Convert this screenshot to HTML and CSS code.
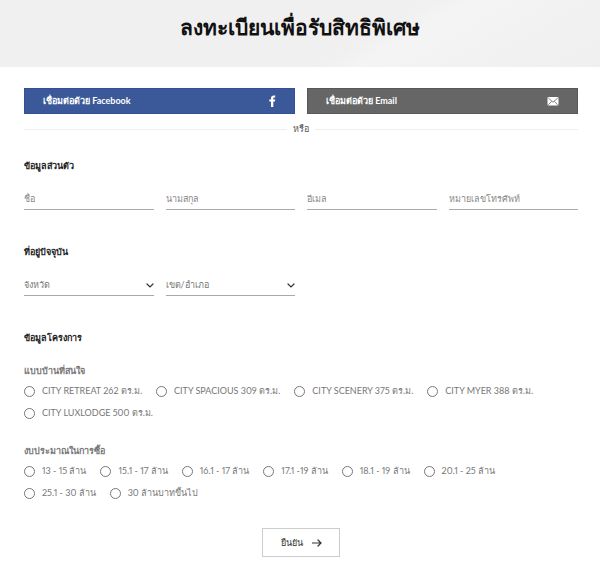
FILE: index.html
```html
<!DOCTYPE html>
<html lang="th">
<head>
    <meta charset="UTF-8">
    <meta name="viewport" content="width=device-width, initial-scale=1.0">
    <title>ลงทะเบียนเพื่อรับสิทธิพิเศษ</title>
    <link rel="stylesheet" href="styles.css">
</head>
<body>
    <header class="page-header">
        <h1>ลงทะเบียนเพื่อรับสิทธิพิเศษ</h1>
    </header>

    <main>
        <form class="register-form">
            <div class="connect">
                <button type="button" class="connect-btn facebook">
                    <span>เชื่อมต่อด้วย Facebook</span>
                    <svg width="8" height="12" viewBox="1 0 8 12" fill="#fff">
                        <path d="M4 12V6.6H2.3V4.5H4V3.2C4 1.2 5 .4 6.8.4c.7 0 1.2 0 1.4.1v1.9H7.2c-.8 0-.9.4-.9 1v1.1h1.9L8 6.6H6.3V12z"/>
                    </svg>
                </button>
                <button type="button" class="connect-btn email">
                    <span>เชื่อมต่อด้วย Email</span>
                    <svg width="12" height="12" viewBox="0 0 12 12">
                        <rect x="0.5" y="2" width="11" height="8.5" rx="1" fill="#fff"/>
                        <path d="M1.5 3.2L6 7.2l4.5-4M1.5 9.6l3-3M10.5 9.6l-3-3" fill="none" stroke="#666" stroke-width="0.8"/>
                    </svg>
                </button>
            </div>

            <div class="divider">หรือ</div>

            <section>
                <h2>ข้อมูลส่วนตัว</h2>
                <div class="fields">
                    <input type="text" name="firstname" placeholder="ชื่อ" aria-label="ชื่อ">
                    <input type="text" name="lastname" placeholder="นามสกุล" aria-label="นามสกุล">
                    <input type="email" name="email" placeholder="อีเมล" aria-label="อีเมล">
                    <input type="tel" name="phone" placeholder="หมายเลขโทรศัพท์" aria-label="หมายเลขโทรศัพท์">
                </div>
            </section>

            <section>
                <h2>ที่อยู่ปัจจุบัน</h2>
                <div class="fields">
                    <div class="select">
                        <select name="province" aria-label="จังหวัด">
                            <option>จังหวัด</option>
                        </select>
                        <svg width="8" height="6" viewBox="0 0 8 6"><path d="M1 1l3 3 3-3"/></svg>
                    </div>
                    <div class="select">
                        <select name="district" aria-label="เขต/อำเภอ">
                            <option>เขต/อำเภอ</option>
                        </select>
                        <svg width="8" height="6" viewBox="0 0 8 6"><path d="M1 1l3 3 3-3"/></svg>
                    </div>
                </div>
            </section>

            <section>
                <h2>ข้อมูลโครงการ</h2>
                <fieldset>
                    <legend>แบบบ้านที่สนใจ</legend>
                    <div class="options">
                        <label><input type="radio" name="house">CITY RETREAT 262 ตร.ม.</label>
                        <label><input type="radio" name="house">CITY SPACIOUS 309 ตร.ม.</label>
                        <label><input type="radio" name="house">CITY SCENERY 375 ตร.ม.</label>
                        <label><input type="radio" name="house">CITY MYER 388 ตร.ม.</label>
                        <label><input type="radio" name="house">CITY LUXLODGE 500 ตร.ม.</label>
                    </div>
                </fieldset>
                <fieldset>
                    <legend>งบประมาณในการซื้อ</legend>
                    <div class="options">
                        <label><input type="radio" name="budget">13 - 15 ล้าน</label>
                        <label><input type="radio" name="budget">15.1 - 17 ล้าน</label>
                        <label><input type="radio" name="budget">16.1 - 17 ล้าน</label>
                        <label><input type="radio" name="budget">17.1 -19 ล้าน</label>
                        <label><input type="radio" name="budget">18.1 - 19 ล้าน</label>
                        <label><input type="radio" name="budget">20.1 - 25 ล้าน</label>
                        <label><input type="radio" name="budget">25.1 - 30 ล้าน</label>
                        <label><input type="radio" name="budget">30 ล้านบาทขึ้นไป</label>
                    </div>
                </fieldset>
            </section>

            <button type="submit" class="submit">
                ยืนยัน
                <svg width="10" height="8" viewBox="0 0 10 8"><path d="M0 4h9M6 1l3 3-3 3"/></svg>
            </button>
        </form>
    </main>
</body>
</html>
```
FILE: styles.css
```css
* { box-sizing: border-box; }
body { margin: 0; background: #fff; color: #777; font: 9px/22px Lato, "Noto Sans", sans-serif; font-variant-numeric: proportional-nums; }
button, input, select { font: inherit; color: inherit; }

.page-header { padding: 9px 22px 22px; background: linear-gradient(150deg, #f0f0f0, #f1f0f0 60%, #f4f4f4 66%, #f0eff0); text-align: center; }
h1 { margin: 0; color: #111; font-size: 21px; font-weight: 700; line-height: 36px; }

.register-form { display: flex; flex-direction: column; padding: 21px 22px 16px 24px; }

/* Social buttons */
.connect { display: grid; grid-template-columns: 1fr 1fr; gap: 12px; }
.connect-btn { display: flex; justify-content: space-between; align-items: center; height: 26px; padding: 0 18px; border: 1px solid; color: #fff; font-weight: 700; cursor: pointer; }
.facebook { background: #3b5998; border-color: #31509a; }
.email { background: #666; border-color: #585858; }

.divider { display: flex; align-items: center; gap: 6px; margin-top: 7px; color: #555; line-height: 16px; }
.divider::before, .divider::after { content: ""; flex: 1; height: 1px; background: #eee; }

section { margin-top: 32px; }
.divider + section { margin-top: 19px; }
h2 { margin: 0 0 8px; color: #222; font-size: 9px; font-weight: 700; line-height: 20px; }

/* Text boxes and drop-downs */
.fields { display: grid; grid-template-columns: repeat(4, 1fr); gap: 12px; }
.fields input, .fields select { width: 100%; height: 26px; padding: 4px 0 0; border: 0; border-bottom: 1px solid #aaa; border-radius: 0; background: none; appearance: none; outline: 0; }
.fields input::placeholder { color: #888; opacity: 1; }
.select { position: relative; color: #777; }
.select svg { position: absolute; right: 0; top: 13px; pointer-events: none; }
svg path { stroke-linecap: round; }
.select path, .submit path { fill: none; stroke: #333; stroke-width: 1.2; }

/* Radio groups */
fieldset { margin: 14px 0 0; padding: 0; border: 0; }
fieldset + fieldset { margin-top: 18px; }
legend { padding: 0; font-size: 9px; font-weight: 700; line-height: 18px; }
.options { display: flex; flex-wrap: wrap; column-gap: 14px; }
.options label { display: flex; align-items: center; gap: 7px; }
.options input { appearance: none; width: 11px; height: 11px; margin: 0; border: 1px solid #777; border-radius: 50%; }
.options input:checked { background: #777; box-shadow: inset 0 0 0 2px #fff; }

.submit { display: flex; align-items: center; justify-content: center; gap: 9px; align-self: center; width: 78px; height: 29px; margin-top: 24px; border: 1px solid #ccc; background: #fff; color: #333; cursor: pointer; }
```
